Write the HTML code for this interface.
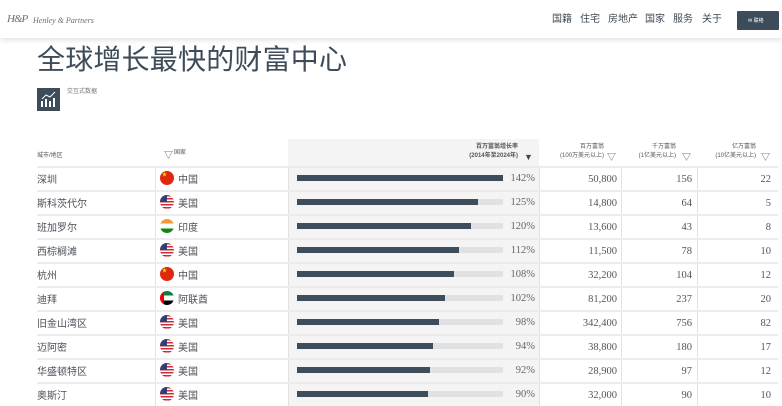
<!DOCTYPE html><html><head><meta charset="utf-8"><style>
*{margin:0;padding:0;box-sizing:border-box}
body{width:782px;height:406px;overflow:hidden;background:#fff;font-family:"Liberation Sans","Noto Sans CJK SC",sans-serif;position:relative;color:#4a4f55}
.a{position:absolute}
.nav{left:0;top:0;width:782px;height:38px;background:#fff;box-shadow:0 2px 5px rgba(0,0,0,.12);z-index:5}
.ni{top:14px;font-size:10px;line-height:12px;color:#3e4a56}
.serif{font-family:"Liberation Serif","Noto Serif CJK SC",serif}
.flag{width:14px;height:14px;border-radius:50%;overflow:hidden}
.cn{background:#de2910}
.us{background:repeating-linear-gradient(#c9303e 0 1.5px,#fff 1.5px 3px)}
.in{background:linear-gradient(#f39a32 0 4.7px,#fff 4.7px 9.3px,#138808 9.3px)}
.ae{background:linear-gradient(90deg,#e00 0 4px,transparent 4px),linear-gradient(#00843d 0 4.7px,#fff 4.7px 9.3px,#000 9.3px)}
.h{font-size:6px;color:#555;line-height:9px}
.tri{font-size:9px;line-height:10px;color:#555}
.t{font-size:10px;line-height:12px;color:#4a5058}
</style></head><body>
<div class="a nav">
 <div class="a serif" style="left:7px;top:13px;font-size:11px;line-height:12px;font-style:italic;color:#6a7077;letter-spacing:-1px">H&amp;P</div>
 <div class="a serif" style="left:33px;top:16px;font-size:8px;line-height:10px;font-style:italic;color:#6a7077">Henley &amp; Partners</div>
 <div class="a ni" style="left:552px">国籍</div>
 <div class="a ni" style="left:580px">住宅</div>
 <div class="a ni" style="left:608px">房地产</div>
 <div class="a ni" style="left:645px">国家</div>
 <div class="a ni" style="left:673px">服务</div>
 <div class="a ni" style="left:702px">关于</div>
 <div class="a" style="left:737px;top:11px;width:42px;height:19px;background:#3d4c5b;border-radius:1px;color:#fff;font-size:5px;line-height:6px;padding:7px 0 0 11px">✉ 联络</div>
</div>
<div class="a" style="left:37px;top:43px;font-size:28px;line-height:34px;color:#3e4c5a;letter-spacing:0.2px">全球增长最快的财富中心</div>
<div class="a" style="left:37px;top:88px;width:23px;height:23px;background:#3d4c5b">
<svg width="23" height="23"><g stroke="#fff" fill="none" stroke-width="1"><polyline points="5,11 9,7 13,9 18,4"/></g><g fill="#fff"><rect x="4" y="13" width="2" height="6"/><rect x="8" y="11" width="2" height="8"/><rect x="12" y="13" width="2" height="6"/><rect x="16" y="10" width="2" height="9"/></g></svg></div>
<div class="a" style="left:67px;top:88px;font-size:6px;line-height:8px;color:#777">交互式数据</div>
<div class="a" style="left:288px;top:139px;width:251px;height:267px;background:#f4f4f4"></div>
<div class="a h" style="left:37px;top:152px">城市/地区</div>
<div class="a tri" style="left:164px;top:150px">▽</div>
<div class="a h" style="left:174px;top:149px">国家</div>
<div class="a h" style="left:440px;top:143px;text-align:right;width:78px;font-weight:bold">百万富翁增长率<br>(2014年至2024年)</div>
<div class="a tri" style="left:524px;top:152px;color:#3d4c5b">▼</div>
<div class="a h" style="left:540px;top:143px;width:64px;text-align:right">百万富翁<br>(100万美元以上)</div>
<div class="a tri" style="left:607px;top:152px">▽</div>
<div class="a h" style="left:610px;top:143px;width:66px;text-align:right">千万富翁<br>(1亿美元以上)</div>
<div class="a tri" style="left:682px;top:152px">▽</div>
<div class="a h" style="left:690px;top:143px;width:66px;text-align:right">亿万富翁<br>(10亿美元以上)</div>
<div class="a tri" style="left:761px;top:152px">▽</div>
<div id="rows"></div>
<script>
var d=[["深圳","cn","中国",142,"50,800",156,22],["斯科茨代尔","us","美国",125,"14,800",64,5],["班加罗尔","in","印度",120,"13,600",43,8],["西棕榈滩","us","美国",112,"11,500",78,10],["杭州","cn","中国",108,"32,200",104,12],["迪拜","ae","阿联酋",102,"81,200",237,20],["旧金山湾区","us","美国",98,"342,400",756,82],["迈阿密","us","美国",94,"38,800",180,17],["华盛顿特区","us","美国",92,"28,900",97,12],["奥斯汀","us","美国",90,"32,000",90,10]];
var h='';
[155,288,539,621,697].forEach(function(x){h+='<div class="a" style="left:'+x+'px;top:166px;width:1px;height:240px;background:#e2e2e2"></div>'});
d.forEach(function(r,i){var t=166+24*i;
h+='<div class="a" style="left:37px;top:'+t+'px;width:741px;height:2px;background:#ececec"></div>';
h+='<div class="a t" style="left:37px;top:'+(t+9)+'px">'+r[0]+'</div>';
h+='<div class="a flag '+r[1]+'" style="left:160px;top:'+(t+5)+'px">'+(r[1]=='us'?'<div style="width:7px;height:7px;background:#2f3f7a"></div>':r[1]=='cn'?'<div style="color:#ffde00;font-size:5px;line-height:5px;margin:2px 0 0 2px">★</div>':'')+'</div>';
h+='<div class="a t" style="left:178px;top:'+(t+9)+'px">'+r[2]+'</div>';
h+='<div class="a" style="left:297px;top:'+(t+9)+'px;width:206px;height:6px;background:#dfe1e3"></div>';
h+='<div class="a" style="left:297px;top:'+(t+9)+'px;width:'+Math.round(206*r[3]/142)+'px;height:6px;background:#3e4d5b"></div>';
h+='<div class="a serif" style="left:500px;width:35px;text-align:right;top:'+(t+7)+'px;font-size:10.5px;line-height:12px;color:#666">'+r[3]+'%</div>';
h+='<div class="a serif" style="left:540px;width:77px;text-align:right;top:'+(t+8)+'px;font-size:10.5px;line-height:12px;color:#555">'+r[4]+'</div>';
h+='<div class="a serif" style="left:622px;width:70px;text-align:right;top:'+(t+8)+'px;font-size:10.5px;line-height:12px;color:#555">'+r[5]+'</div>';
h+='<div class="a serif" style="left:698px;width:73px;text-align:right;top:'+(t+8)+'px;font-size:10.5px;line-height:12px;color:#555">'+r[6]+'</div>';});
document.getElementById('rows').innerHTML=h;
</script>
</body></html>
